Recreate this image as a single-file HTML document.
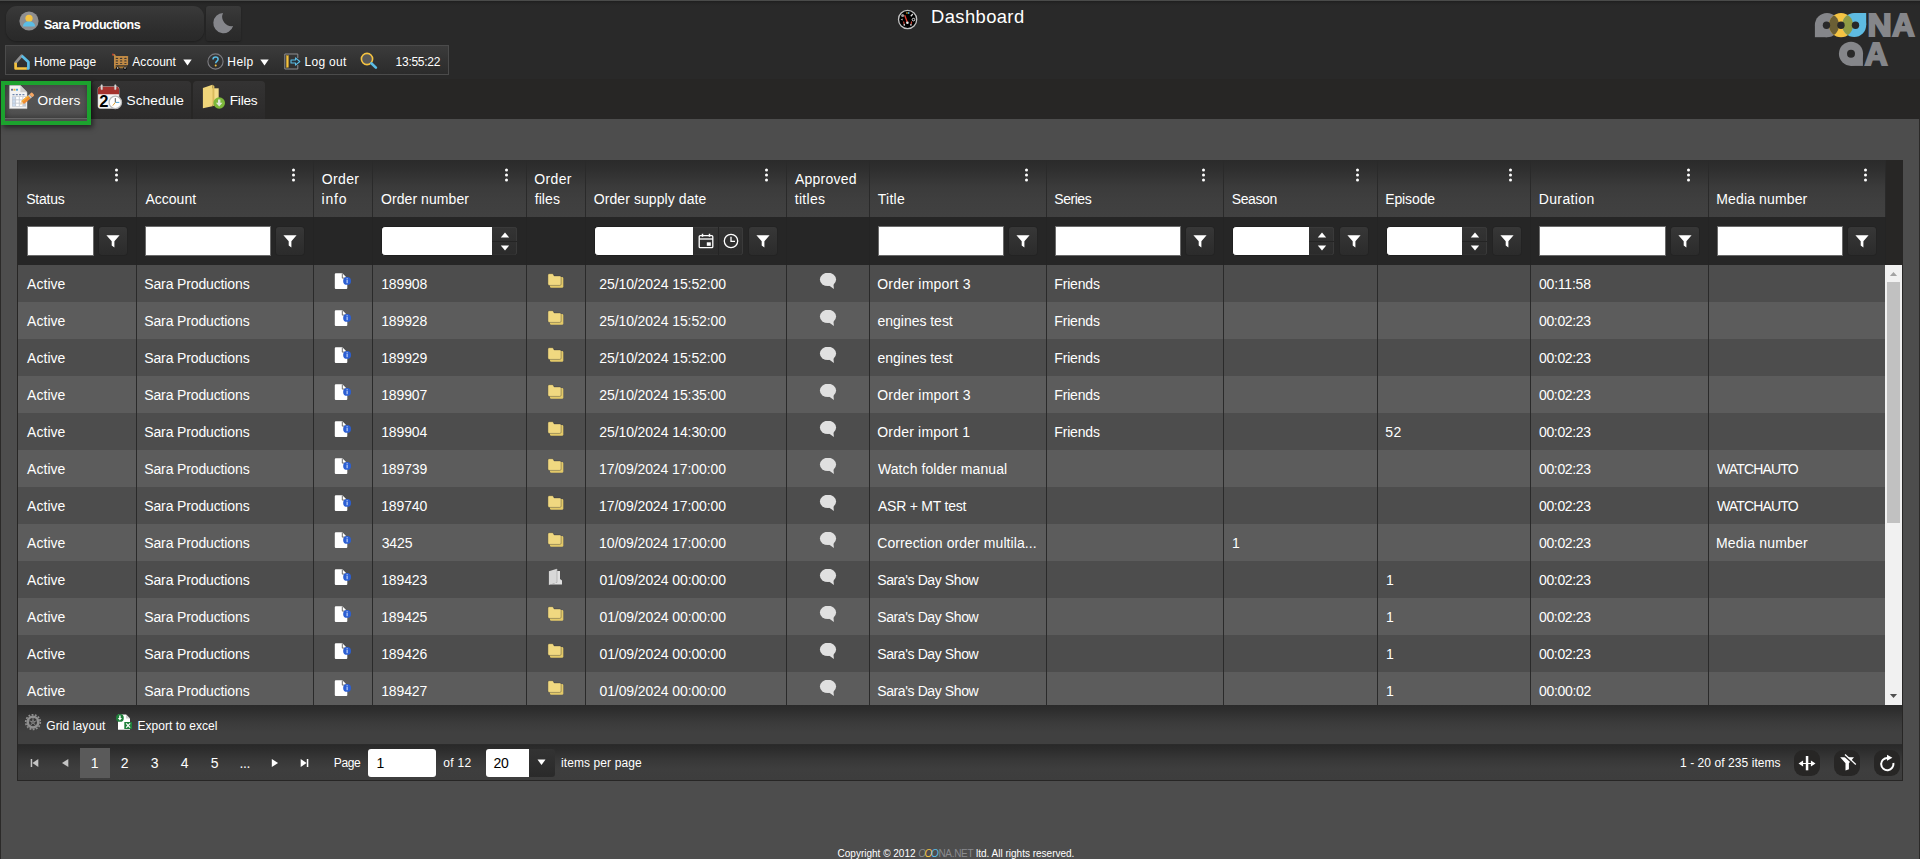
<!DOCTYPE html>
<html lang="en"><head><meta charset="utf-8"><title>Dashboard</title>
<style>
*{box-sizing:border-box;margin:0;padding:0}
html,body{width:1920px;height:859px;overflow:hidden}
body{background:#4d4d4d;font-family:"Liberation Sans",sans-serif;color:#fff;position:relative;font-size:12px}
.abs{position:absolute}
.t{position:absolute;white-space:pre;line-height:1}
#top{position:absolute;left:0;top:0;width:1920px;height:79px;background:#292929}
#topline{position:absolute;left:0;top:0;width:1920px;height:6px;background:linear-gradient(#4a4b4a 0,#4a4b4a 1px,#1f1f1f 1px,#222 2px,#272727 4px,#292929 6px)}
#tabband{position:absolute;left:0;top:79px;width:1920px;height:40px;background:#272625}
#ledge{position:absolute;left:0;top:119px;width:1px;height:740px;background:#2b2a29}
#redge{position:absolute;left:1919px;top:119px;width:1px;height:740px;background:#2b2a29}
.ub{position:absolute;top:6px;height:35px;background:linear-gradient(#3a3a3a,#343434 30%,#2c2c2c 75%,#292929);box-shadow:0 1px 2px rgba(0,0,0,.3)}
#menu{position:absolute;left:5px;top:45px;width:444px;height:30px;border:1px solid #4b4b4b;background:linear-gradient(#3b3b3b,#2b2b2b)}
.tab{position:absolute;top:81px;height:38px;border-radius:4px 4px 0 0;background:linear-gradient(#343333,#2b2a2a)}
#tab1{left:5px;width:83px;background:linear-gradient(#484848,#545454 50%,#505050);box-shadow:inset 0 0 6px rgba(0,0,0,.45);border-bottom:1px solid #666}
#green{position:absolute;left:1px;top:81px;width:90px;height:44px;border:4px solid #1ca22e;box-shadow:2px 3px 5px rgba(0,0,0,.5)}
#gridbg{position:absolute;left:17px;top:160px;width:1886px;height:621px;background:#272625}
#hdr{position:absolute;left:18px;top:160px;width:1867px;height:57px;background:linear-gradient(#2a2a2a 0%,#2e2e2e 14%,#3b3b3b 48%,#3f3f3f 72%,#414141 100%)}
#flt{position:absolute;left:18px;top:217px;width:1867px;height:48px;background:#262626}
.vl{position:absolute;width:1px;background:#2a2a2a}
.inp{position:absolute;top:226px;height:30px;background:#fff;border:1px solid #6a6a6a}
.fb{position:absolute;top:227px;width:28px;height:28px;border-radius:3px;background:linear-gradient(#373737,#2b2b2b);box-shadow:0 0 1px rgba(0,0,0,.6)}
.fb .ic{position:absolute;left:7px;top:7px}
.spin{position:absolute;top:227px;height:28px;width:25px;border-radius:0 3px 3px 0;background:linear-gradient(#343434,#2b2b2b);box-shadow:inset -1px 0 0 #3a3a3a,inset 0 1px 0 #3a3a3a,inset 0 -1px 0 #303030}
#body{position:absolute;left:18px;top:265px;width:1867px;height:440px;overflow:hidden}
.r{position:absolute;left:0;width:1867px;height:37px;background:#4d4d4d}
.r.alt{background:#5c5c5c}
.i{position:absolute}
.i svg{display:block}
#sb{position:absolute;left:1885px;top:265px;width:17px;height:440px;background:#f1f1f1}
#tb{position:absolute;left:18px;top:705px;width:1884px;height:39px;background:linear-gradient(#2a2a2a 0%,#2e2e2e 14%,#3b3b3b 46%,#404040 70%,#404040 100%)}
#pg{position:absolute;left:18px;top:744px;width:1884px;height:36px;background:linear-gradient(#292929 0%,#2d2d2d 14%,#393939 46%,#3e3e3e 70%,#3d3d3d 100%);border-top:1px solid #2b2b2b}
.rb{position:absolute;top:750px;width:26px;height:26px;border-radius:9px;background:#272625}
#foot{position:absolute;left:0;top:848px;width:1912px;text-align:center;font-size:10px;line-height:12px;white-space:pre}
</style></head><body>
<div id="top"></div><div id="topline"></div><div id="tabband"></div><div id="ledge"></div><div id="redge"></div>
<div class="ub" style="left:6px;width:198px;border-radius:11px"></div><div class="ub" style="left:206px;width:35px;border-radius:3px"></div><svg class="abs" style="left:18.500px;top:11px" width="20" height="20" viewBox="0 0 20 20"><circle cx="10" cy="10" r="9.600" fill="#8e8e90"/><circle cx="10" cy="7.300" r="3.600" fill="#f5c341"/><path d="M4 15.600c0-3.200 2.400-5 6-5s6 1.800 6 5z" fill="#5bbde6"/></svg><svg class="abs" style="left:211px;top:11px" width="24" height="24" viewBox="0 0 24 24"><path d="M12 2A10.100 10.100 0 1 0 22.100 15 9.400 9.400 0 0 1 12 2z" fill="#85868b"/></svg><div id="menu"></div><svg class="abs" style="left:14px;top:53px" width="17" height="17" viewBox="0 0 17 17"><path d="M1.600 9.700L7.700 2.700" stroke="#8e8e90" stroke-width="2.700" fill="none" stroke-linecap="round"/><path d="M7.700 2.700L14.400 9V15.500H12.500" stroke="#5bbde6" stroke-width="2.700" fill="none" stroke-linejoin="round"/><path d="M1.600 9.700V15.500H12.800" stroke="#f5c341" stroke-width="2.700" fill="none" stroke-linejoin="round"/></svg><svg class="abs" style="left:112px;top:53px" width="17" height="17" viewBox="0 0 17 17"><path d="M.5 1.500l1.900.5.9 1.500" stroke="#c08a45" stroke-width="1.500" fill="none"/><circle cx=".8" cy="1.500" r=".9" fill="#c0392b"/><rect x="2" y="2.900" width="14.100" height="9.400" rx=".7" fill="#c08a45"/><rect x="2" y="2.900" width="1.600" height="12.600" fill="#c08a45"/><rect x="2" y="13.400" width="12.600" height="1.900" fill="#a87835"/><g fill="#3b3733"><ellipse cx="4.900" cy="5.400" rx="1.300" ry=".6"/><ellipse cx="9.100" cy="5.400" rx="1.300" ry=".6"/><ellipse cx="13.400" cy="5.400" rx="1.300" ry=".6"/><ellipse cx="4.900" cy="7.900" rx="1.300" ry=".6"/><ellipse cx="9.100" cy="7.900" rx="1.300" ry=".6"/><ellipse cx="13.400" cy="7.900" rx="1.300" ry=".6"/><ellipse cx="4.900" cy="10.500" rx="1.300" ry=".6"/><ellipse cx="9.100" cy="10.500" rx="1.300" ry=".6"/><ellipse cx="13.400" cy="10.500" rx="1.300" ry=".6"/></g><circle cx="5.700" cy="15.200" r="1.750" fill="#0c0c0c"/><circle cx="13" cy="15.200" r="1.750" fill="#0c0c0c"/><circle cx="5.700" cy="15" r=".8" fill="#f0f0f0"/><circle cx="13" cy="15" r=".8" fill="#f0f0f0"/></svg><svg class="abs" style="left:182.5px;top:58.5px" width="9" height="7" viewBox="0 0 9 7"><path d="M.3.500h8.400L4.500 6.500z" fill="#fff"/></svg><svg class="abs" style="left:207px;top:53px" width="17" height="17" viewBox="0 0 17 17"><circle cx="8.500" cy="8.500" r="7.600" fill="none" stroke="#7d7d82" stroke-width="1.100"/><path d="M6 6.600c0-1.500 1.100-2.500 2.600-2.500s2.500.9 2.500 2.200c0 1.800-2.400 1.900-2.400 4" stroke="#5bbde6" stroke-width="1.500" fill="none"/><circle cx="8.700" cy="12.600" r="1" fill="#f5c341"/></svg><svg class="abs" style="left:259.5px;top:58.5px" width="9" height="7" viewBox="0 0 9 7"><path d="M.3.500h8.400L4.500 6.500z" fill="#fff"/></svg><svg class="abs" style="left:284px;top:53px" width="17" height="17" viewBox="0 0 17 17"><path d="M13.800 5V1H.8v15h13v-4" stroke="#8e8e90" stroke-width="1" fill="none"/><rect x="2.300" y="2.600" width="2.200" height="11.800" fill="#f5c341" stroke="#b8902a" stroke-width=".5"/><path d="M7 7h4.500V4.800l4.300 3.700-4.300 3.700V10H7z" fill="#26323a" stroke="#5bbde6" stroke-width="1.100" stroke-linejoin="round"/></svg><svg class="abs" style="left:360px;top:52px" width="19" height="18" viewBox="0 0 19 18"><circle cx="7" cy="7" r="5.600" fill="#585858" stroke="#f5c341" stroke-width="1.600"/><path d="M11.300 11.300l4.600 4.300" stroke="#5bbde6" stroke-width="2.600" stroke-linecap="round"/></svg><svg class="abs" style="left:897px;top:9px" width="21" height="21" viewBox="0 0 21 21"><circle cx="10.600" cy="10.500" r="9.100" fill="#000" stroke="#c2c2c2" stroke-width="1.300"/><path d="M10.200 13L7.700 6.200" stroke="#e8392c" stroke-width="1.300"/><circle cx="10.400" cy="13.700" r="1.300" fill="#e8e8e8"/><circle cx="5.600" cy="6.600" r="1.500" fill="#9a9a9a"/><path d="M13.800 7.200l2-2.200" stroke="#e0e0e0" stroke-width="1.300"/><circle cx="16.500" cy="10.600" r="1.300" fill="none" stroke="#e0e0e0" stroke-width="1"/><path d="M3.600 10.600l2-1v2z" fill="#bdbdbd"/><rect x="9.300" y="3.200" width="1.300" height="1.600" fill="#d6b23c"/><rect x="11" y="3.200" width="1.400" height="1.600" fill="#5bbde6"/><path d="M6.600 12.500l.6 3" stroke="#e04a3a" stroke-width="1.100"/><path d="M14.600 12.500l-.6 3" stroke="#e04a3a" stroke-width="1.100"/><circle cx="7.300" cy="15.900" r=".8" fill="#e8e8e8"/><circle cx="13.900" cy="15.900" r=".8" fill="#e8e8e8"/></svg><svg class="abs" style="left:1808px;top:6px" width="112" height="66" viewBox="0 0 112 66" role="img" aria-label="OOONA QA"><title>OOONA QA</title>
<defs><clipPath id="cy"><circle cx="33" cy="19.100" r="12.100"/></clipPath><clipPath id="cb"><circle cx="46.200" cy="19.100" r="12"/><rect x="46.200" y="7" width="12" height="12.100"/></clipPath></defs>
<g fill="#85868a"><circle cx="19" cy="19.100" r="12.100"/><rect x="6.900" y="19.100" width="12.100" height="12.100"/></g>
<circle cx="33" cy="19.100" r="12.100" fill="#f5c443"/>
<g fill="#6b5f35" clip-path="url(#cy)"><circle cx="19" cy="19.100" r="12.100"/><rect x="6.900" y="19.100" width="12.100" height="12.100"/></g>
<g fill="#5ebbe2"><circle cx="46.200" cy="19.100" r="12"/><rect x="46.200" y="7" width="12" height="12.100"/></g>
<circle cx="33" cy="19.100" r="12.100" fill="#8f9b45" clip-path="url(#cb)"/>
<circle cx="18.500" cy="19.200" r="3.700" fill="#292929"/><circle cx="33" cy="19.200" r="3.700" fill="#292929"/><circle cx="47.500" cy="19.200" r="3.700" fill="#292929"/>
<g font-family="'Liberation Sans',sans-serif" font-weight="bold" fill="#85868a" stroke="#85868a" stroke-width="2" stroke-linejoin="miter" font-size="31">
<text x="0" y="0" transform="translate(59.500 30.200) scale(1.080 1)">N</text>
<text x="0" y="0" transform="translate(84.300 30.200) scale(1 1)">A</text>
<text x="0" y="0" transform="translate(56.800 59) scale(1.020 1)">A</text>
</g>
<g fill="#85868a"><circle cx="43" cy="47.800" r="12.100"/><rect x="43" y="47.800" width="11.900" height="12.100"/></g>
<circle cx="43" cy="47.700" r="4" fill="#292929"/>
</svg>
<div class="tab" id="tab1"></div><div class="tab" style="left:92px;width:99px"></div><div class="tab" style="left:193px;width:72px"></div><svg class="abs" style="left:9px;top:85px" width="26" height="25" viewBox="0 0 26 25"><path d="M.6.600H11.400L18 7.200V23.600H.6z" fill="#f3f3f3" stroke="#d2d2d2" stroke-width=".5"/><path d="M11.400.6V7.200H18z" fill="#cdcdcd"/><rect x="2" y="3.800" width="2" height="1.800" fill="#5f6f8f"/><rect x="4.500" y="3.800" width="2" height="1.800" fill="#e0b040"/><rect x="7" y="3.800" width="2" height="1.800" fill="#4aa3d8"/><path d="M3.500 9.700h2M6.800 9.700h2M10.100 9.700h2M13.400 9.700h2" stroke="#6f86ad" stroke-width="1.300"/><rect x="3" y="11.300" width="14" height="10.400" fill="#c3c9d2"/><rect x="3.600" y="12" width="2.600" height="2.400" fill="#c9daee"/><rect x="3.600" y="15.300" width="2.600" height="2.400" fill="#c9daee"/><rect x="3.600" y="18.600" width="2.600" height="2.400" fill="#c9daee"/><rect x="7.100" y="12" width="2.700" height="2.400" fill="#fff"/><rect x="7.100" y="15.300" width="2.700" height="2.400" fill="#fff"/><rect x="7.100" y="18.600" width="2.700" height="2.400" fill="#fff"/><rect x="10.700" y="12" width="2.700" height="2.400" fill="#fff"/><rect x="10.700" y="15.300" width="2.700" height="2.400" fill="#fff"/><rect x="10.700" y="18.600" width="2.700" height="2.400" fill="#fff"/><rect x="14.300" y="12" width="2.200" height="2.400" fill="#fff"/><rect x="14.300" y="15.300" width="2.200" height="2.400" fill="#fff"/><g transform="translate(11 19.800) rotate(-40)"><path d="M0 0L3.500-2V2z" fill="#f4d3a6"/><rect x="3.500" y="-2" width="8.700" height="4" fill="#f08a2e"/><rect x="3.500" y="-2" width="8.700" height="1.400" fill="#f2b13a"/><rect x="12.200" y="-2" width="1.900" height="4" fill="#c6c6c6"/><rect x="14.100" y="-2" width="3.100" height="4" rx="1" fill="#f6a662"/></g></svg><svg class="abs" style="left:97px;top:84px" width="27" height="27" viewBox="0 0 27 27"><rect x="1" y="2.800" width="21" height="21.600" rx="2.200" fill="#f6f6f6" stroke="#cfcfcf" stroke-width=".6"/><path d="M1 5a2.200 2.200 0 0 1 2.200-2.200h16.600A2.200 2.200 0 0 1 22 5v5.300H1z" fill="#a5322d"/><rect x="3.800" y=".6" width="1.800" height="5.200" rx=".9" fill="#dcdcdc" stroke="#aaa" stroke-width=".3"/><rect x="17.400" y=".6" width="1.800" height="5.200" rx=".9" fill="#dcdcdc" stroke="#aaa" stroke-width=".3"/><text x="2.200" y="22.800" font-family="'Liberation Sans',sans-serif" font-weight="bold" font-size="16.500" fill="#000">2</text><circle cx="18.300" cy="18.400" r="6.200" fill="#fff" stroke="#b9b9b9" stroke-width="1.300"/><path d="M18.300 18.400v-4.300" stroke="#555" stroke-width="1"/><path d="M18.300 18.400h4" stroke="#4aa3d8" stroke-width="1"/><path d="M18.300 18.400l-2.500 3.200" stroke="#e0a030" stroke-width="1"/></svg><svg class="abs" style="left:201px;top:84px" width="26" height="27" viewBox="0 0 26 27"><path d="M10 4.300h7.700v16.500H10z" fill="#f3dc8a"/><path d="M1.900 4L11.400.8V22.300L1.900 24.200z" fill="#f0d57a"/><path d="M11.400.8l2 1.300V21.800l-2 .5z" fill="#d9bb5c"/><circle cx="18.200" cy="19" r="5.800" fill="#7cb83a"/><path d="M17 15.600h2.400v3.200h2.100l-3.300 3.600-3.300-3.600h2.100z" fill="#dfe6d8"/></svg><div id="green"></div><div id="gridbg"></div><div id="hdr"></div><div id="flt"></div><div class="vl" style="left:136px;top:160px;height:57px"></div><div class="vl" style="left:136px;top:217px;height:48px;background:#242424"></div><svg class="abs" style="left:114px;top:168px" width="5" height="14" viewBox="0 0 5 14"><circle cx="2.500" cy="2" r="1.500" fill="#fff"/><circle cx="2.500" cy="7.100" r="1.500" fill="#fff"/><circle cx="2.500" cy="12.100" r="1.500" fill="#fff"/></svg><div class="inp" style="left:27px;width:67px"></div><div class="fb" style="left:99px"><svg class="ic" width="14" height="14" viewBox="0 0 14 14"><path d="M0.400 1.300h13.200l-5.200 5.900v6.300l-2.700-2V7.200z" fill="#fff"/></svg></div><div class="vl" style="left:313px;top:160px;height:57px"></div><div class="vl" style="left:313px;top:217px;height:48px;background:#242424"></div><svg class="abs" style="left:291px;top:168px" width="5" height="14" viewBox="0 0 5 14"><circle cx="2.500" cy="2" r="1.500" fill="#fff"/><circle cx="2.500" cy="7.100" r="1.500" fill="#fff"/><circle cx="2.500" cy="12.100" r="1.500" fill="#fff"/></svg><div class="inp" style="left:145px;width:126px"></div><div class="fb" style="left:276px"><svg class="ic" width="14" height="14" viewBox="0 0 14 14"><path d="M0.400 1.300h13.200l-5.200 5.900v6.300l-2.700-2V7.200z" fill="#fff"/></svg></div><div class="vl" style="left:372px;top:160px;height:57px"></div><div class="vl" style="left:372px;top:217px;height:48px;background:#242424"></div><div class="vl" style="left:526px;top:160px;height:57px"></div><div class="vl" style="left:526px;top:217px;height:48px;background:#242424"></div><svg class="abs" style="left:504px;top:168px" width="5" height="14" viewBox="0 0 5 14"><circle cx="2.500" cy="2" r="1.500" fill="#fff"/><circle cx="2.500" cy="7.100" r="1.500" fill="#fff"/><circle cx="2.500" cy="12.100" r="1.500" fill="#fff"/></svg><div class="inp" style="left:381px;width:111px;border-radius:4px 0 0 4px;border-right:0;border-color:#1f1f1f"></div><div class="spin" style="left:492px"><svg class="abs" style="left:8px;top:4.500px" width="10" height="6" viewBox="0 0 10 6"><path d="M.8 5.600L5 .4l4.200 5.200z" fill="#fff"/></svg><svg class="abs" style="left:8px;top:17.500px" width="10" height="6" viewBox="0 0 10 6"><path d="M.8.400L5 5.600 9.200.4z" fill="#fff"/></svg><div class="abs" style="left:0;top:13.500px;width:25px;height:1px;background:#242424"></div></div><div class="vl" style="left:585px;top:160px;height:57px"></div><div class="vl" style="left:585px;top:217px;height:48px;background:#242424"></div><div class="vl" style="left:786px;top:160px;height:57px"></div><div class="vl" style="left:786px;top:217px;height:48px;background:#242424"></div><svg class="abs" style="left:764px;top:168px" width="5" height="14" viewBox="0 0 5 14"><circle cx="2.500" cy="2" r="1.500" fill="#fff"/><circle cx="2.500" cy="7.100" r="1.500" fill="#fff"/><circle cx="2.500" cy="12.100" r="1.500" fill="#fff"/></svg><div class="inp" style="left:594px;width:99px;border-radius:4px 0 0 4px;border-right:0;border-color:#1f1f1f"></div><div class="spin" style="left:693px;width:50px"><div class="abs" style="left:25px;top:0;width:1px;height:28px;background:#242424"></div><svg class="abs" style="left:5px;top:5.500px" width="16" height="16" viewBox="0 0 16 16"><rect x="1.200" y="2.700" width="13.600" height="12" rx="1" fill="none" stroke="#fff" stroke-width="1.300"/><path d="M1.200 6h13.600" stroke="#fff" stroke-width="1.300"/><path d="M4.500.8v3M11.500.8v3" stroke="#fff" stroke-width="1.500"/><rect x="8.800" y="9.300" width="4" height="3.500" fill="#fff"/></svg><svg class="abs" style="left:30px;top:6px" width="16" height="16" viewBox="0 0 16 16"><circle cx="8" cy="8" r="6.700" fill="none" stroke="#fff" stroke-width="1.300"/><path d="M8 3.800V8.300h4" fill="none" stroke="#fff" stroke-width="1.300"/></svg></div><div class="fb" style="left:749px"><svg class="ic" width="14" height="14" viewBox="0 0 14 14"><path d="M0.400 1.300h13.200l-5.200 5.900v6.300l-2.700-2V7.200z" fill="#fff"/></svg></div><div class="vl" style="left:869px;top:160px;height:57px"></div><div class="vl" style="left:869px;top:217px;height:48px;background:#242424"></div><div class="vl" style="left:1046px;top:160px;height:57px"></div><div class="vl" style="left:1046px;top:217px;height:48px;background:#242424"></div><svg class="abs" style="left:1024px;top:168px" width="5" height="14" viewBox="0 0 5 14"><circle cx="2.500" cy="2" r="1.500" fill="#fff"/><circle cx="2.500" cy="7.100" r="1.500" fill="#fff"/><circle cx="2.500" cy="12.100" r="1.500" fill="#fff"/></svg><div class="inp" style="left:878px;width:126px"></div><div class="fb" style="left:1009px"><svg class="ic" width="14" height="14" viewBox="0 0 14 14"><path d="M0.400 1.300h13.200l-5.200 5.900v6.300l-2.700-2V7.200z" fill="#fff"/></svg></div><div class="vl" style="left:1223px;top:160px;height:57px"></div><div class="vl" style="left:1223px;top:217px;height:48px;background:#242424"></div><svg class="abs" style="left:1201px;top:168px" width="5" height="14" viewBox="0 0 5 14"><circle cx="2.500" cy="2" r="1.500" fill="#fff"/><circle cx="2.500" cy="7.100" r="1.500" fill="#fff"/><circle cx="2.500" cy="12.100" r="1.500" fill="#fff"/></svg><div class="inp" style="left:1055px;width:126px"></div><div class="fb" style="left:1186px"><svg class="ic" width="14" height="14" viewBox="0 0 14 14"><path d="M0.400 1.300h13.200l-5.200 5.900v6.300l-2.700-2V7.200z" fill="#fff"/></svg></div><div class="vl" style="left:1377px;top:160px;height:57px"></div><div class="vl" style="left:1377px;top:217px;height:48px;background:#242424"></div><svg class="abs" style="left:1355px;top:168px" width="5" height="14" viewBox="0 0 5 14"><circle cx="2.500" cy="2" r="1.500" fill="#fff"/><circle cx="2.500" cy="7.100" r="1.500" fill="#fff"/><circle cx="2.500" cy="12.100" r="1.500" fill="#fff"/></svg><div class="inp" style="left:1232px;width:77px;border-radius:4px 0 0 4px;border-right:0;border-color:#1f1f1f"></div><div class="spin" style="left:1309px"><svg class="abs" style="left:8px;top:4.500px" width="10" height="6" viewBox="0 0 10 6"><path d="M.8 5.600L5 .4l4.200 5.200z" fill="#fff"/></svg><svg class="abs" style="left:8px;top:17.500px" width="10" height="6" viewBox="0 0 10 6"><path d="M.8.400L5 5.600 9.200.4z" fill="#fff"/></svg><div class="abs" style="left:0;top:13.500px;width:25px;height:1px;background:#242424"></div></div><div class="fb" style="left:1340px"><svg class="ic" width="14" height="14" viewBox="0 0 14 14"><path d="M0.400 1.300h13.200l-5.200 5.900v6.300l-2.700-2V7.200z" fill="#fff"/></svg></div><div class="vl" style="left:1530px;top:160px;height:57px"></div><div class="vl" style="left:1530px;top:217px;height:48px;background:#242424"></div><svg class="abs" style="left:1508px;top:168px" width="5" height="14" viewBox="0 0 5 14"><circle cx="2.500" cy="2" r="1.500" fill="#fff"/><circle cx="2.500" cy="7.100" r="1.500" fill="#fff"/><circle cx="2.500" cy="12.100" r="1.500" fill="#fff"/></svg><div class="inp" style="left:1386px;width:76px;border-radius:4px 0 0 4px;border-right:0;border-color:#1f1f1f"></div><div class="spin" style="left:1462px"><svg class="abs" style="left:8px;top:4.500px" width="10" height="6" viewBox="0 0 10 6"><path d="M.8 5.600L5 .4l4.200 5.200z" fill="#fff"/></svg><svg class="abs" style="left:8px;top:17.500px" width="10" height="6" viewBox="0 0 10 6"><path d="M.8.400L5 5.600 9.200.4z" fill="#fff"/></svg><div class="abs" style="left:0;top:13.500px;width:25px;height:1px;background:#242424"></div></div><div class="fb" style="left:1493px"><svg class="ic" width="14" height="14" viewBox="0 0 14 14"><path d="M0.400 1.300h13.200l-5.200 5.900v6.300l-2.700-2V7.200z" fill="#fff"/></svg></div><div class="vl" style="left:1708px;top:160px;height:57px"></div><div class="vl" style="left:1708px;top:217px;height:48px;background:#242424"></div><svg class="abs" style="left:1686px;top:168px" width="5" height="14" viewBox="0 0 5 14"><circle cx="2.500" cy="2" r="1.500" fill="#fff"/><circle cx="2.500" cy="7.100" r="1.500" fill="#fff"/><circle cx="2.500" cy="12.100" r="1.500" fill="#fff"/></svg><div class="inp" style="left:1539px;width:127px"></div><div class="fb" style="left:1671px"><svg class="ic" width="14" height="14" viewBox="0 0 14 14"><path d="M0.400 1.300h13.200l-5.200 5.900v6.300l-2.700-2V7.200z" fill="#fff"/></svg></div><div class="vl" style="left:1885px;top:160px;height:57px"></div><div class="vl" style="left:1885px;top:217px;height:48px;background:#242424"></div><svg class="abs" style="left:1863px;top:168px" width="5" height="14" viewBox="0 0 5 14"><circle cx="2.500" cy="2" r="1.500" fill="#fff"/><circle cx="2.500" cy="7.100" r="1.500" fill="#fff"/><circle cx="2.500" cy="12.100" r="1.500" fill="#fff"/></svg><div class="inp" style="left:1717px;width:126px"></div><div class="fb" style="left:1848px"><svg class="ic" width="14" height="14" viewBox="0 0 14 14"><path d="M0.400 1.300h13.200l-5.200 5.900v6.300l-2.700-2V7.200z" fill="#fff"/></svg></div><div id="body"><div class="r" style="top:0px"><div class="vl" style="left:118px;top:0;height:37px"></div><div class="vl" style="left:295px;top:0;height:37px"></div><div class="vl" style="left:354px;top:0;height:37px"></div><div class="vl" style="left:508px;top:0;height:37px"></div><div class="vl" style="left:567px;top:0;height:37px"></div><div class="vl" style="left:768px;top:0;height:37px"></div><div class="vl" style="left:851px;top:0;height:37px"></div><div class="vl" style="left:1028px;top:0;height:37px"></div><div class="vl" style="left:1205px;top:0;height:37px"></div><div class="vl" style="left:1359px;top:0;height:37px"></div><div class="vl" style="left:1512px;top:0;height:37px"></div><div class="vl" style="left:1690px;top:0;height:37px"></div><div class="vl" style="left:1867px;top:0;height:37px"></div><span class="i" style="left:316px;top:8px"><svg width="18" height="17" viewBox="0 0 18 17"><path d="M1.800.2H8.400L13.300 5.200V15a1 1 0 0 1-1 1H1.800a1 1 0 0 1-1-1V1.200a1 1 0 0 1 1-1z" fill="#fff"/><path d="M8.300.5V5.100H13" stroke="#5a5a5a" stroke-width=".9" fill="none"/><circle cx="13.100" cy="7.900" r="3.950" fill="#2c5fd3"/><rect x="12.450" y="6.900" width="1.400" height="3.300" fill="#a9c0f0"/><rect x="12.450" y="5.200" width="1.400" height="1.100" fill="#a9c0f0"/></svg></span><span class="i" style="left:529px;top:8px"><svg width="17" height="16" viewBox="0 0 17 16"><path d="M4.300 4H15a1.300 1.300 0 0 1 1.300 1.300V13.400a1.300 1.300 0 0 1-1.300 1.300H4.300A1.300 1.300 0 0 1 3 13.400V5.300z" fill="#e3c968"/><path d="M2.200.7H5.900L7.100 2.900H12.800a1.300 1.300 0 0 1 1.300 1.300V11.100a1.300 1.300 0 0 1-1.300 1.300H2.200A1.300 1.300 0 0 1 .9 11.100V2A1.300 1.300 0 0 1 2.200.7z" fill="#f0d880" stroke="rgba(50,50,50,.55)" stroke-width=".7"/></svg></span><span class="i" style="left:801px;top:8px"><svg width="18" height="17" viewBox="0 0 18 17"><ellipse cx="9" cy="6.400" rx="8.100" ry="6.700" fill="#e0e0e0"/><path d="M10 12.400L14.900 16.100L14.300 9.500z" fill="#e0e0e0"/></svg></span></div><div class="r alt" style="top:37px"><div class="vl" style="left:118px;top:0;height:37px"></div><div class="vl" style="left:295px;top:0;height:37px"></div><div class="vl" style="left:354px;top:0;height:37px"></div><div class="vl" style="left:508px;top:0;height:37px"></div><div class="vl" style="left:567px;top:0;height:37px"></div><div class="vl" style="left:768px;top:0;height:37px"></div><div class="vl" style="left:851px;top:0;height:37px"></div><div class="vl" style="left:1028px;top:0;height:37px"></div><div class="vl" style="left:1205px;top:0;height:37px"></div><div class="vl" style="left:1359px;top:0;height:37px"></div><div class="vl" style="left:1512px;top:0;height:37px"></div><div class="vl" style="left:1690px;top:0;height:37px"></div><div class="vl" style="left:1867px;top:0;height:37px"></div><span class="i" style="left:316px;top:8px"><svg width="18" height="17" viewBox="0 0 18 17"><path d="M1.800.2H8.400L13.300 5.200V15a1 1 0 0 1-1 1H1.800a1 1 0 0 1-1-1V1.200a1 1 0 0 1 1-1z" fill="#fff"/><path d="M8.300.5V5.100H13" stroke="#5a5a5a" stroke-width=".9" fill="none"/><circle cx="13.100" cy="7.900" r="3.950" fill="#2c5fd3"/><rect x="12.450" y="6.900" width="1.400" height="3.300" fill="#a9c0f0"/><rect x="12.450" y="5.200" width="1.400" height="1.100" fill="#a9c0f0"/></svg></span><span class="i" style="left:529px;top:8px"><svg width="17" height="16" viewBox="0 0 17 16"><path d="M4.300 4H15a1.300 1.300 0 0 1 1.300 1.300V13.400a1.300 1.300 0 0 1-1.300 1.300H4.300A1.300 1.300 0 0 1 3 13.400V5.300z" fill="#e3c968"/><path d="M2.200.7H5.900L7.100 2.900H12.800a1.300 1.300 0 0 1 1.300 1.300V11.100a1.300 1.300 0 0 1-1.300 1.300H2.200A1.300 1.300 0 0 1 .9 11.100V2A1.300 1.300 0 0 1 2.200.7z" fill="#f0d880" stroke="rgba(50,50,50,.55)" stroke-width=".7"/></svg></span><span class="i" style="left:801px;top:8px"><svg width="18" height="17" viewBox="0 0 18 17"><ellipse cx="9" cy="6.400" rx="8.100" ry="6.700" fill="#e0e0e0"/><path d="M10 12.400L14.900 16.100L14.300 9.500z" fill="#e0e0e0"/></svg></span></div><div class="r" style="top:74px"><div class="vl" style="left:118px;top:0;height:37px"></div><div class="vl" style="left:295px;top:0;height:37px"></div><div class="vl" style="left:354px;top:0;height:37px"></div><div class="vl" style="left:508px;top:0;height:37px"></div><div class="vl" style="left:567px;top:0;height:37px"></div><div class="vl" style="left:768px;top:0;height:37px"></div><div class="vl" style="left:851px;top:0;height:37px"></div><div class="vl" style="left:1028px;top:0;height:37px"></div><div class="vl" style="left:1205px;top:0;height:37px"></div><div class="vl" style="left:1359px;top:0;height:37px"></div><div class="vl" style="left:1512px;top:0;height:37px"></div><div class="vl" style="left:1690px;top:0;height:37px"></div><div class="vl" style="left:1867px;top:0;height:37px"></div><span class="i" style="left:316px;top:8px"><svg width="18" height="17" viewBox="0 0 18 17"><path d="M1.800.2H8.400L13.300 5.200V15a1 1 0 0 1-1 1H1.800a1 1 0 0 1-1-1V1.200a1 1 0 0 1 1-1z" fill="#fff"/><path d="M8.300.5V5.100H13" stroke="#5a5a5a" stroke-width=".9" fill="none"/><circle cx="13.100" cy="7.900" r="3.950" fill="#2c5fd3"/><rect x="12.450" y="6.900" width="1.400" height="3.300" fill="#a9c0f0"/><rect x="12.450" y="5.200" width="1.400" height="1.100" fill="#a9c0f0"/></svg></span><span class="i" style="left:529px;top:8px"><svg width="17" height="16" viewBox="0 0 17 16"><path d="M4.300 4H15a1.300 1.300 0 0 1 1.300 1.300V13.400a1.300 1.300 0 0 1-1.300 1.300H4.300A1.300 1.300 0 0 1 3 13.400V5.300z" fill="#e3c968"/><path d="M2.200.7H5.900L7.100 2.900H12.800a1.300 1.300 0 0 1 1.300 1.300V11.100a1.300 1.300 0 0 1-1.300 1.300H2.200A1.300 1.300 0 0 1 .9 11.100V2A1.300 1.300 0 0 1 2.200.7z" fill="#f0d880" stroke="rgba(50,50,50,.55)" stroke-width=".7"/></svg></span><span class="i" style="left:801px;top:8px"><svg width="18" height="17" viewBox="0 0 18 17"><ellipse cx="9" cy="6.400" rx="8.100" ry="6.700" fill="#e0e0e0"/><path d="M10 12.400L14.900 16.100L14.300 9.500z" fill="#e0e0e0"/></svg></span></div><div class="r alt" style="top:111px"><div class="vl" style="left:118px;top:0;height:37px"></div><div class="vl" style="left:295px;top:0;height:37px"></div><div class="vl" style="left:354px;top:0;height:37px"></div><div class="vl" style="left:508px;top:0;height:37px"></div><div class="vl" style="left:567px;top:0;height:37px"></div><div class="vl" style="left:768px;top:0;height:37px"></div><div class="vl" style="left:851px;top:0;height:37px"></div><div class="vl" style="left:1028px;top:0;height:37px"></div><div class="vl" style="left:1205px;top:0;height:37px"></div><div class="vl" style="left:1359px;top:0;height:37px"></div><div class="vl" style="left:1512px;top:0;height:37px"></div><div class="vl" style="left:1690px;top:0;height:37px"></div><div class="vl" style="left:1867px;top:0;height:37px"></div><span class="i" style="left:316px;top:8px"><svg width="18" height="17" viewBox="0 0 18 17"><path d="M1.800.2H8.400L13.300 5.200V15a1 1 0 0 1-1 1H1.800a1 1 0 0 1-1-1V1.200a1 1 0 0 1 1-1z" fill="#fff"/><path d="M8.300.5V5.100H13" stroke="#5a5a5a" stroke-width=".9" fill="none"/><circle cx="13.100" cy="7.900" r="3.950" fill="#2c5fd3"/><rect x="12.450" y="6.900" width="1.400" height="3.300" fill="#a9c0f0"/><rect x="12.450" y="5.200" width="1.400" height="1.100" fill="#a9c0f0"/></svg></span><span class="i" style="left:529px;top:8px"><svg width="17" height="16" viewBox="0 0 17 16"><path d="M4.300 4H15a1.300 1.300 0 0 1 1.300 1.300V13.400a1.300 1.300 0 0 1-1.300 1.300H4.300A1.300 1.300 0 0 1 3 13.400V5.300z" fill="#e3c968"/><path d="M2.200.7H5.900L7.100 2.900H12.800a1.300 1.300 0 0 1 1.300 1.300V11.100a1.300 1.300 0 0 1-1.300 1.300H2.200A1.300 1.300 0 0 1 .9 11.100V2A1.300 1.300 0 0 1 2.200.7z" fill="#f0d880" stroke="rgba(50,50,50,.55)" stroke-width=".7"/></svg></span><span class="i" style="left:801px;top:8px"><svg width="18" height="17" viewBox="0 0 18 17"><ellipse cx="9" cy="6.400" rx="8.100" ry="6.700" fill="#e0e0e0"/><path d="M10 12.400L14.900 16.100L14.300 9.500z" fill="#e0e0e0"/></svg></span></div><div class="r" style="top:148px"><div class="vl" style="left:118px;top:0;height:37px"></div><div class="vl" style="left:295px;top:0;height:37px"></div><div class="vl" style="left:354px;top:0;height:37px"></div><div class="vl" style="left:508px;top:0;height:37px"></div><div class="vl" style="left:567px;top:0;height:37px"></div><div class="vl" style="left:768px;top:0;height:37px"></div><div class="vl" style="left:851px;top:0;height:37px"></div><div class="vl" style="left:1028px;top:0;height:37px"></div><div class="vl" style="left:1205px;top:0;height:37px"></div><div class="vl" style="left:1359px;top:0;height:37px"></div><div class="vl" style="left:1512px;top:0;height:37px"></div><div class="vl" style="left:1690px;top:0;height:37px"></div><div class="vl" style="left:1867px;top:0;height:37px"></div><span class="i" style="left:316px;top:8px"><svg width="18" height="17" viewBox="0 0 18 17"><path d="M1.800.2H8.400L13.300 5.200V15a1 1 0 0 1-1 1H1.800a1 1 0 0 1-1-1V1.200a1 1 0 0 1 1-1z" fill="#fff"/><path d="M8.300.5V5.100H13" stroke="#5a5a5a" stroke-width=".9" fill="none"/><circle cx="13.100" cy="7.900" r="3.950" fill="#2c5fd3"/><rect x="12.450" y="6.900" width="1.400" height="3.300" fill="#a9c0f0"/><rect x="12.450" y="5.200" width="1.400" height="1.100" fill="#a9c0f0"/></svg></span><span class="i" style="left:529px;top:8px"><svg width="17" height="16" viewBox="0 0 17 16"><path d="M4.300 4H15a1.300 1.300 0 0 1 1.300 1.300V13.400a1.300 1.300 0 0 1-1.300 1.300H4.300A1.300 1.300 0 0 1 3 13.400V5.300z" fill="#e3c968"/><path d="M2.200.7H5.900L7.100 2.900H12.800a1.300 1.300 0 0 1 1.300 1.300V11.100a1.300 1.300 0 0 1-1.300 1.300H2.200A1.300 1.300 0 0 1 .9 11.100V2A1.300 1.300 0 0 1 2.200.7z" fill="#f0d880" stroke="rgba(50,50,50,.55)" stroke-width=".7"/></svg></span><span class="i" style="left:801px;top:8px"><svg width="18" height="17" viewBox="0 0 18 17"><ellipse cx="9" cy="6.400" rx="8.100" ry="6.700" fill="#e0e0e0"/><path d="M10 12.400L14.900 16.100L14.300 9.500z" fill="#e0e0e0"/></svg></span></div><div class="r alt" style="top:185px"><div class="vl" style="left:118px;top:0;height:37px"></div><div class="vl" style="left:295px;top:0;height:37px"></div><div class="vl" style="left:354px;top:0;height:37px"></div><div class="vl" style="left:508px;top:0;height:37px"></div><div class="vl" style="left:567px;top:0;height:37px"></div><div class="vl" style="left:768px;top:0;height:37px"></div><div class="vl" style="left:851px;top:0;height:37px"></div><div class="vl" style="left:1028px;top:0;height:37px"></div><div class="vl" style="left:1205px;top:0;height:37px"></div><div class="vl" style="left:1359px;top:0;height:37px"></div><div class="vl" style="left:1512px;top:0;height:37px"></div><div class="vl" style="left:1690px;top:0;height:37px"></div><div class="vl" style="left:1867px;top:0;height:37px"></div><span class="i" style="left:316px;top:8px"><svg width="18" height="17" viewBox="0 0 18 17"><path d="M1.800.2H8.400L13.300 5.200V15a1 1 0 0 1-1 1H1.800a1 1 0 0 1-1-1V1.200a1 1 0 0 1 1-1z" fill="#fff"/><path d="M8.300.5V5.100H13" stroke="#5a5a5a" stroke-width=".9" fill="none"/><circle cx="13.100" cy="7.900" r="3.950" fill="#2c5fd3"/><rect x="12.450" y="6.900" width="1.400" height="3.300" fill="#a9c0f0"/><rect x="12.450" y="5.200" width="1.400" height="1.100" fill="#a9c0f0"/></svg></span><span class="i" style="left:529px;top:8px"><svg width="17" height="16" viewBox="0 0 17 16"><path d="M4.300 4H15a1.300 1.300 0 0 1 1.300 1.300V13.400a1.300 1.300 0 0 1-1.300 1.300H4.300A1.300 1.300 0 0 1 3 13.400V5.300z" fill="#e3c968"/><path d="M2.200.7H5.900L7.100 2.900H12.800a1.300 1.300 0 0 1 1.300 1.300V11.100a1.300 1.300 0 0 1-1.300 1.300H2.200A1.300 1.300 0 0 1 .9 11.100V2A1.300 1.300 0 0 1 2.200.7z" fill="#f0d880" stroke="rgba(50,50,50,.55)" stroke-width=".7"/></svg></span><span class="i" style="left:801px;top:8px"><svg width="18" height="17" viewBox="0 0 18 17"><ellipse cx="9" cy="6.400" rx="8.100" ry="6.700" fill="#e0e0e0"/><path d="M10 12.400L14.900 16.100L14.300 9.500z" fill="#e0e0e0"/></svg></span></div><div class="r" style="top:222px"><div class="vl" style="left:118px;top:0;height:37px"></div><div class="vl" style="left:295px;top:0;height:37px"></div><div class="vl" style="left:354px;top:0;height:37px"></div><div class="vl" style="left:508px;top:0;height:37px"></div><div class="vl" style="left:567px;top:0;height:37px"></div><div class="vl" style="left:768px;top:0;height:37px"></div><div class="vl" style="left:851px;top:0;height:37px"></div><div class="vl" style="left:1028px;top:0;height:37px"></div><div class="vl" style="left:1205px;top:0;height:37px"></div><div class="vl" style="left:1359px;top:0;height:37px"></div><div class="vl" style="left:1512px;top:0;height:37px"></div><div class="vl" style="left:1690px;top:0;height:37px"></div><div class="vl" style="left:1867px;top:0;height:37px"></div><span class="i" style="left:316px;top:8px"><svg width="18" height="17" viewBox="0 0 18 17"><path d="M1.800.2H8.400L13.300 5.200V15a1 1 0 0 1-1 1H1.800a1 1 0 0 1-1-1V1.200a1 1 0 0 1 1-1z" fill="#fff"/><path d="M8.300.5V5.100H13" stroke="#5a5a5a" stroke-width=".9" fill="none"/><circle cx="13.100" cy="7.900" r="3.950" fill="#2c5fd3"/><rect x="12.450" y="6.900" width="1.400" height="3.300" fill="#a9c0f0"/><rect x="12.450" y="5.200" width="1.400" height="1.100" fill="#a9c0f0"/></svg></span><span class="i" style="left:529px;top:8px"><svg width="17" height="16" viewBox="0 0 17 16"><path d="M4.300 4H15a1.300 1.300 0 0 1 1.300 1.300V13.400a1.300 1.300 0 0 1-1.300 1.300H4.300A1.300 1.300 0 0 1 3 13.400V5.300z" fill="#e3c968"/><path d="M2.200.7H5.900L7.100 2.900H12.800a1.300 1.300 0 0 1 1.300 1.300V11.100a1.300 1.300 0 0 1-1.300 1.300H2.200A1.300 1.300 0 0 1 .9 11.100V2A1.300 1.300 0 0 1 2.200.7z" fill="#f0d880" stroke="rgba(50,50,50,.55)" stroke-width=".7"/></svg></span><span class="i" style="left:801px;top:8px"><svg width="18" height="17" viewBox="0 0 18 17"><ellipse cx="9" cy="6.400" rx="8.100" ry="6.700" fill="#e0e0e0"/><path d="M10 12.400L14.900 16.100L14.300 9.500z" fill="#e0e0e0"/></svg></span></div><div class="r alt" style="top:259px"><div class="vl" style="left:118px;top:0;height:37px"></div><div class="vl" style="left:295px;top:0;height:37px"></div><div class="vl" style="left:354px;top:0;height:37px"></div><div class="vl" style="left:508px;top:0;height:37px"></div><div class="vl" style="left:567px;top:0;height:37px"></div><div class="vl" style="left:768px;top:0;height:37px"></div><div class="vl" style="left:851px;top:0;height:37px"></div><div class="vl" style="left:1028px;top:0;height:37px"></div><div class="vl" style="left:1205px;top:0;height:37px"></div><div class="vl" style="left:1359px;top:0;height:37px"></div><div class="vl" style="left:1512px;top:0;height:37px"></div><div class="vl" style="left:1690px;top:0;height:37px"></div><div class="vl" style="left:1867px;top:0;height:37px"></div><span class="i" style="left:316px;top:8px"><svg width="18" height="17" viewBox="0 0 18 17"><path d="M1.800.2H8.400L13.300 5.200V15a1 1 0 0 1-1 1H1.800a1 1 0 0 1-1-1V1.200a1 1 0 0 1 1-1z" fill="#fff"/><path d="M8.300.5V5.100H13" stroke="#5a5a5a" stroke-width=".9" fill="none"/><circle cx="13.100" cy="7.900" r="3.950" fill="#2c5fd3"/><rect x="12.450" y="6.900" width="1.400" height="3.300" fill="#a9c0f0"/><rect x="12.450" y="5.200" width="1.400" height="1.100" fill="#a9c0f0"/></svg></span><span class="i" style="left:529px;top:8px"><svg width="17" height="16" viewBox="0 0 17 16"><path d="M4.300 4H15a1.300 1.300 0 0 1 1.300 1.300V13.400a1.300 1.300 0 0 1-1.300 1.300H4.300A1.300 1.300 0 0 1 3 13.400V5.300z" fill="#e3c968"/><path d="M2.200.7H5.900L7.100 2.900H12.800a1.300 1.300 0 0 1 1.300 1.300V11.100a1.300 1.300 0 0 1-1.300 1.300H2.200A1.300 1.300 0 0 1 .9 11.100V2A1.300 1.300 0 0 1 2.200.7z" fill="#f0d880" stroke="rgba(50,50,50,.55)" stroke-width=".7"/></svg></span><span class="i" style="left:801px;top:8px"><svg width="18" height="17" viewBox="0 0 18 17"><ellipse cx="9" cy="6.400" rx="8.100" ry="6.700" fill="#e0e0e0"/><path d="M10 12.400L14.900 16.100L14.300 9.500z" fill="#e0e0e0"/></svg></span></div><div class="r" style="top:296px"><div class="vl" style="left:118px;top:0;height:37px"></div><div class="vl" style="left:295px;top:0;height:37px"></div><div class="vl" style="left:354px;top:0;height:37px"></div><div class="vl" style="left:508px;top:0;height:37px"></div><div class="vl" style="left:567px;top:0;height:37px"></div><div class="vl" style="left:768px;top:0;height:37px"></div><div class="vl" style="left:851px;top:0;height:37px"></div><div class="vl" style="left:1028px;top:0;height:37px"></div><div class="vl" style="left:1205px;top:0;height:37px"></div><div class="vl" style="left:1359px;top:0;height:37px"></div><div class="vl" style="left:1512px;top:0;height:37px"></div><div class="vl" style="left:1690px;top:0;height:37px"></div><div class="vl" style="left:1867px;top:0;height:37px"></div><span class="i" style="left:316px;top:8px"><svg width="18" height="17" viewBox="0 0 18 17"><path d="M1.800.2H8.400L13.300 5.200V15a1 1 0 0 1-1 1H1.800a1 1 0 0 1-1-1V1.200a1 1 0 0 1 1-1z" fill="#fff"/><path d="M8.300.5V5.100H13" stroke="#5a5a5a" stroke-width=".9" fill="none"/><circle cx="13.100" cy="7.900" r="3.950" fill="#2c5fd3"/><rect x="12.450" y="6.900" width="1.400" height="3.300" fill="#a9c0f0"/><rect x="12.450" y="5.200" width="1.400" height="1.100" fill="#a9c0f0"/></svg></span><span class="i" style="left:530px;top:7px"><svg width="15" height="18" viewBox="0 0 15 18"><path d="M9 3H12V11L14 12.500V16.500H2L9 14.500z" fill="#e0e0e0"/><path d="M.9 3.200L9 .8V14.500L.9 16.900z" fill="#d8d8d8"/><path d="M9 1V14.400" stroke="#a8a8a8" stroke-width=".7"/></svg></span><span class="i" style="left:801px;top:8px"><svg width="18" height="17" viewBox="0 0 18 17"><ellipse cx="9" cy="6.400" rx="8.100" ry="6.700" fill="#e0e0e0"/><path d="M10 12.400L14.900 16.100L14.300 9.500z" fill="#e0e0e0"/></svg></span></div><div class="r alt" style="top:333px"><div class="vl" style="left:118px;top:0;height:37px"></div><div class="vl" style="left:295px;top:0;height:37px"></div><div class="vl" style="left:354px;top:0;height:37px"></div><div class="vl" style="left:508px;top:0;height:37px"></div><div class="vl" style="left:567px;top:0;height:37px"></div><div class="vl" style="left:768px;top:0;height:37px"></div><div class="vl" style="left:851px;top:0;height:37px"></div><div class="vl" style="left:1028px;top:0;height:37px"></div><div class="vl" style="left:1205px;top:0;height:37px"></div><div class="vl" style="left:1359px;top:0;height:37px"></div><div class="vl" style="left:1512px;top:0;height:37px"></div><div class="vl" style="left:1690px;top:0;height:37px"></div><div class="vl" style="left:1867px;top:0;height:37px"></div><span class="i" style="left:316px;top:8px"><svg width="18" height="17" viewBox="0 0 18 17"><path d="M1.800.2H8.400L13.300 5.200V15a1 1 0 0 1-1 1H1.800a1 1 0 0 1-1-1V1.200a1 1 0 0 1 1-1z" fill="#fff"/><path d="M8.300.5V5.100H13" stroke="#5a5a5a" stroke-width=".9" fill="none"/><circle cx="13.100" cy="7.900" r="3.950" fill="#2c5fd3"/><rect x="12.450" y="6.900" width="1.400" height="3.300" fill="#a9c0f0"/><rect x="12.450" y="5.200" width="1.400" height="1.100" fill="#a9c0f0"/></svg></span><span class="i" style="left:529px;top:8px"><svg width="17" height="16" viewBox="0 0 17 16"><path d="M4.300 4H15a1.300 1.300 0 0 1 1.300 1.300V13.400a1.300 1.300 0 0 1-1.300 1.300H4.300A1.300 1.300 0 0 1 3 13.400V5.300z" fill="#e3c968"/><path d="M2.200.7H5.900L7.100 2.900H12.800a1.300 1.300 0 0 1 1.300 1.300V11.100a1.300 1.300 0 0 1-1.300 1.300H2.200A1.300 1.300 0 0 1 .9 11.100V2A1.300 1.300 0 0 1 2.200.7z" fill="#f0d880" stroke="rgba(50,50,50,.55)" stroke-width=".7"/></svg></span><span class="i" style="left:801px;top:8px"><svg width="18" height="17" viewBox="0 0 18 17"><ellipse cx="9" cy="6.400" rx="8.100" ry="6.700" fill="#e0e0e0"/><path d="M10 12.400L14.900 16.100L14.300 9.500z" fill="#e0e0e0"/></svg></span></div><div class="r" style="top:370px"><div class="vl" style="left:118px;top:0;height:37px"></div><div class="vl" style="left:295px;top:0;height:37px"></div><div class="vl" style="left:354px;top:0;height:37px"></div><div class="vl" style="left:508px;top:0;height:37px"></div><div class="vl" style="left:567px;top:0;height:37px"></div><div class="vl" style="left:768px;top:0;height:37px"></div><div class="vl" style="left:851px;top:0;height:37px"></div><div class="vl" style="left:1028px;top:0;height:37px"></div><div class="vl" style="left:1205px;top:0;height:37px"></div><div class="vl" style="left:1359px;top:0;height:37px"></div><div class="vl" style="left:1512px;top:0;height:37px"></div><div class="vl" style="left:1690px;top:0;height:37px"></div><div class="vl" style="left:1867px;top:0;height:37px"></div><span class="i" style="left:316px;top:8px"><svg width="18" height="17" viewBox="0 0 18 17"><path d="M1.800.2H8.400L13.300 5.200V15a1 1 0 0 1-1 1H1.800a1 1 0 0 1-1-1V1.200a1 1 0 0 1 1-1z" fill="#fff"/><path d="M8.300.5V5.100H13" stroke="#5a5a5a" stroke-width=".9" fill="none"/><circle cx="13.100" cy="7.900" r="3.950" fill="#2c5fd3"/><rect x="12.450" y="6.900" width="1.400" height="3.300" fill="#a9c0f0"/><rect x="12.450" y="5.200" width="1.400" height="1.100" fill="#a9c0f0"/></svg></span><span class="i" style="left:529px;top:8px"><svg width="17" height="16" viewBox="0 0 17 16"><path d="M4.300 4H15a1.300 1.300 0 0 1 1.300 1.300V13.400a1.300 1.300 0 0 1-1.300 1.300H4.300A1.300 1.300 0 0 1 3 13.400V5.300z" fill="#e3c968"/><path d="M2.200.7H5.900L7.100 2.900H12.800a1.300 1.300 0 0 1 1.300 1.300V11.100a1.300 1.300 0 0 1-1.300 1.300H2.200A1.300 1.300 0 0 1 .9 11.100V2A1.300 1.300 0 0 1 2.200.7z" fill="#f0d880" stroke="rgba(50,50,50,.55)" stroke-width=".7"/></svg></span><span class="i" style="left:801px;top:8px"><svg width="18" height="17" viewBox="0 0 18 17"><ellipse cx="9" cy="6.400" rx="8.100" ry="6.700" fill="#e0e0e0"/><path d="M10 12.400L14.900 16.100L14.300 9.500z" fill="#e0e0e0"/></svg></span></div><div class="r alt" style="top:407px"><div class="vl" style="left:118px;top:0;height:37px"></div><div class="vl" style="left:295px;top:0;height:37px"></div><div class="vl" style="left:354px;top:0;height:37px"></div><div class="vl" style="left:508px;top:0;height:37px"></div><div class="vl" style="left:567px;top:0;height:37px"></div><div class="vl" style="left:768px;top:0;height:37px"></div><div class="vl" style="left:851px;top:0;height:37px"></div><div class="vl" style="left:1028px;top:0;height:37px"></div><div class="vl" style="left:1205px;top:0;height:37px"></div><div class="vl" style="left:1359px;top:0;height:37px"></div><div class="vl" style="left:1512px;top:0;height:37px"></div><div class="vl" style="left:1690px;top:0;height:37px"></div><div class="vl" style="left:1867px;top:0;height:37px"></div><span class="i" style="left:316px;top:8px"><svg width="18" height="17" viewBox="0 0 18 17"><path d="M1.800.2H8.400L13.300 5.200V15a1 1 0 0 1-1 1H1.800a1 1 0 0 1-1-1V1.200a1 1 0 0 1 1-1z" fill="#fff"/><path d="M8.300.5V5.100H13" stroke="#5a5a5a" stroke-width=".9" fill="none"/><circle cx="13.100" cy="7.900" r="3.950" fill="#2c5fd3"/><rect x="12.450" y="6.900" width="1.400" height="3.300" fill="#a9c0f0"/><rect x="12.450" y="5.200" width="1.400" height="1.100" fill="#a9c0f0"/></svg></span><span class="i" style="left:529px;top:8px"><svg width="17" height="16" viewBox="0 0 17 16"><path d="M4.300 4H15a1.300 1.300 0 0 1 1.300 1.300V13.400a1.300 1.300 0 0 1-1.300 1.300H4.300A1.300 1.300 0 0 1 3 13.400V5.300z" fill="#e3c968"/><path d="M2.200.7H5.900L7.100 2.900H12.800a1.300 1.300 0 0 1 1.300 1.300V11.100a1.300 1.300 0 0 1-1.300 1.300H2.200A1.300 1.300 0 0 1 .9 11.100V2A1.300 1.300 0 0 1 2.200.7z" fill="#f0d880" stroke="rgba(50,50,50,.55)" stroke-width=".7"/></svg></span><span class="i" style="left:801px;top:8px"><svg width="18" height="17" viewBox="0 0 18 17"><ellipse cx="9" cy="6.400" rx="8.100" ry="6.700" fill="#e0e0e0"/><path d="M10 12.400L14.900 16.100L14.300 9.500z" fill="#e0e0e0"/></svg></span></div></div><div id="sb"><svg class="abs" style="left:4px;top:6px" width="9" height="6" viewBox="0 0 9 6"><path d="M.9 5L4.500 1 8.100 5z" fill="#a3a3a3"/></svg>
<div class="abs" style="left:2px;top:17px;width:13px;height:241px;background:#c1c1c1"></div>
<svg class="abs" style="left:4px;top:428px" width="9" height="6" viewBox="0 0 9 6"><path d="M.9 1L4.500 5 8.100 1z" fill="#505050"/></svg></div>
<div id="tb"></div><svg class="abs" style="left:24px;top:713px" width="18" height="18" viewBox="0 0 18 18"><g fill="none" stroke="#8f8f8f"><circle cx="9" cy="9.100" r="7.300" stroke-width="1.700" stroke-dasharray="1.850 1.427"/><circle cx="9" cy="9.100" r="5.300" stroke-width="2.500"/><circle cx="9" cy="9.100" r="1.200" stroke-width="1"/><path d="M9 7.900V5M10.100 8.700l2.700-.9M9.700 10.100l1.700 2.300M8.300 10.100l-1.700 2.300M7.900 8.700l-2.700-.9" stroke-width=".9"/></g></svg><svg class="abs" style="left:115px;top:713px" width="18" height="18" viewBox="0 0 18 18"><path d="M3 1.500H11L15 5.500V16.800H3z" fill="#fff"/><path d="M11 1.500V5.500H15z" fill="#cfcfcf"/><circle cx="4.900" cy="4.900" r="3.900" fill="#1f7f3a"/><path d="M4.900 2.400V5.600" stroke="#fff" stroke-width="1.500"/><path d="M2.800 4.900h4.200L4.900 7.400z" fill="#fff"/><rect x="9.300" y="9" width="7.700" height="7" fill="#1f7f3a"/><path d="M11.200 10.400l3.900 4.200M15.100 10.400l-3.900 4.200" stroke="#fff" stroke-width="1.300"/></svg><div id="pg"></div><svg class="abs" style="left:30px;top:758px" width="9" height="10" viewBox="0 0 9 10"><rect x=".7" y="1" width="1.500" height="8" fill="#c4c4c4"/><path d="M8.300 1v8L2.400 5z" fill="#c4c4c4"/></svg>
<svg class="abs" style="left:61px;top:758px" width="8" height="10" viewBox="0 0 8 10"><path d="M7.300 1v8L1 5z" fill="#c4c4c4"/></svg>
<div class="abs" style="left:80px;top:748px;width:30px;height:30px;background:#5a5a5a"></div>
<svg class="abs" style="left:271px;top:758px" width="8" height="10" viewBox="0 0 8 10"><path d="M.8 1v8L7.100 5z" fill="#fff"/></svg>
<svg class="abs" style="left:300px;top:758px" width="9" height="10" viewBox="0 0 9 10"><rect x="6.800" y="1" width="1.500" height="8" fill="#fff"/><path d="M.7 1v8L6.600 5z" fill="#fff"/></svg>
<div class="abs" style="left:368px;top:749px;width:68px;height:28px;background:#fff;border-radius:3px"></div>
<div class="abs" style="left:486px;top:749px;width:43px;height:28px;background:#fff;border-radius:3px 0 0 3px"></div>
<div class="abs" style="left:529px;top:749px;width:26px;height:28px;background:linear-gradient(#333,#2a2a2a);border-radius:0 3px 3px 0"></div>
<svg class="abs" style="left:537px;top:759px" width="9" height="7" viewBox="0 0 9 7"><path d="M.5.500h8L4.500 6z" fill="#fff"/></svg>
<div class="rb" style="left:1794px"><svg class="abs" style="left:0;top:0" width="26" height="26" viewBox="0 0 26 26"><rect x="11.800" y="6" width="2.500" height="14.300" fill="#fff"/><path d="M4.500 13.500L9.100 10.600V16.400zM21.500 13.500L16.900 10.600V16.400z" fill="#fff"/><path d="M9 13.500h3M14 13.500h3" stroke="#fff" stroke-width="1.200"/></svg></div>
<div class="rb" style="left:1834px"><svg class="abs" style="left:0;top:0" width="26" height="26" viewBox="0 0 26 26"><path d="M6.200 7.200H20L14.900 13.200V19.200L11.500 20.400V13.200z" fill="#fff"/><path d="M9.800 5.200L20.600 15" stroke="#272625" stroke-width="1.700"/><path d="M11 4.600L21.800 14.400" stroke="#fff" stroke-width="1.300"/></svg></div>
<div class="rb" style="left:1874px"><svg class="abs" style="left:0;top:0" width="26" height="26" viewBox="0 0 26 26"><path d="M13.300 8A6.100 6.100 0 1 0 19.300 13" stroke="#fff" stroke-width="2" fill="none"/><path d="M13 4.800V10.800L18.400 7.800z" fill="#fff"/></svg></div>
<span class="t" style="left:43.95px;top:19px;font-size:12.5px;letter-spacing:-0.450px;font-weight:700">Sara Productions</span>
<span class="t" style="left:34.00px;top:56px;font-size:12px;letter-spacing:0.013px">Home page</span>
<span class="t" style="left:132.30px;top:56px;font-size:12px;letter-spacing:0.042px">Account</span>
<span class="t" style="left:227.30px;top:56px;font-size:12px;letter-spacing:0.417px">Help</span>
<span class="t" style="left:304.50px;top:56px;font-size:12px;letter-spacing:0.283px">Log out</span>
<span class="t" style="left:395.60px;top:56px;font-size:12px;letter-spacing:-0.279px">13:55:22</span>
<span class="t" style="left:931.00px;top:8px;font-size:18.4px;letter-spacing:0.394px">Dashboard</span>
<span class="t" style="left:37.50px;top:94px;font-size:13.7px;letter-spacing:0.200px">Orders</span>
<span class="t" style="left:126.45px;top:94px;font-size:13.7px;letter-spacing:0.064px">Schedule</span>
<span class="t" style="left:229.70px;top:94px;font-size:13.7px;letter-spacing:-0.225px">Files</span>
<span class="t" style="left:26.25px;top:192px;font-size:14px;letter-spacing:-0.250px">Status</span>
<span class="t" style="left:145.50px;top:192px;font-size:14px">Account</span>
<span class="t" style="left:321.75px;top:172px;font-size:14px;letter-spacing:0.375px">Order</span>
<span class="t" style="left:321.50px;top:192px;font-size:14px;letter-spacing:0.833px">info</span>
<span class="t" style="left:381.00px;top:192px;font-size:14px;letter-spacing:0.068px">Order number</span>
<span class="t" style="left:534.25px;top:172px;font-size:14px;letter-spacing:0.375px">Order</span>
<span class="t" style="left:534.75px;top:192px;font-size:14px;letter-spacing:0.062px">files</span>
<span class="t" style="left:593.75px;top:192px;font-size:14px;letter-spacing:0.078px">Order supply date</span>
<span class="t" style="left:795.00px;top:172px;font-size:14px;letter-spacing:0.214px">Approved</span>
<span class="t" style="left:794.75px;top:192px;font-size:14px;letter-spacing:0.300px">titles</span>
<span class="t" style="left:877.75px;top:192px;font-size:14px;letter-spacing:0.250px">Title</span>
<span class="t" style="left:1054.25px;top:192px;font-size:14px;letter-spacing:-0.450px">Series</span>
<span class="t" style="left:1231.75px;top:192px;font-size:14px;letter-spacing:-0.400px">Season</span>
<span class="t" style="left:1385.25px;top:192px;font-size:14px;letter-spacing:-0.125px">Episode</span>
<span class="t" style="left:1538.75px;top:192px;font-size:14px;letter-spacing:0.357px">Duration</span>
<span class="t" style="left:1716.25px;top:192px;font-size:14px;letter-spacing:0.136px">Media number</span>
<span class="t" style="left:27.00px;top:277px;font-size:14px;letter-spacing:0.050px">Active</span>
<span class="t" style="left:144.25px;top:277px;font-size:14px;letter-spacing:-0.133px">Sara Productions</span>
<span class="t" style="left:381.20px;top:277px;font-size:14px;letter-spacing:-0.130px">189908</span>
<span class="t" style="left:599.25px;top:277px;font-size:14px;letter-spacing:-0.092px">25/10/2024 15:52:00</span>
<span class="t" style="left:877.25px;top:277px;font-size:14px;letter-spacing:0.231px">Order import 3</span>
<span class="t" style="left:1054.25px;top:277px;font-size:14px;letter-spacing:-0.167px">Friends</span>
<span class="t" style="left:1539.00px;top:277px;font-size:14px;letter-spacing:-0.214px">00:11:58</span>
<span class="t" style="left:27.00px;top:314px;font-size:14px;letter-spacing:0.050px">Active</span>
<span class="t" style="left:144.25px;top:314px;font-size:14px;letter-spacing:-0.133px">Sara Productions</span>
<span class="t" style="left:381.20px;top:314px;font-size:14px;letter-spacing:-0.130px">189928</span>
<span class="t" style="left:599.25px;top:314px;font-size:14px;letter-spacing:-0.092px">25/10/2024 15:52:00</span>
<span class="t" style="left:877.50px;top:314px;font-size:14px;letter-spacing:-0.023px">engines test</span>
<span class="t" style="left:1054.25px;top:314px;font-size:14px;letter-spacing:-0.167px">Friends</span>
<span class="t" style="left:1539.00px;top:314px;font-size:14px;letter-spacing:-0.357px">00:02:23</span>
<span class="t" style="left:27.00px;top:351px;font-size:14px;letter-spacing:0.050px">Active</span>
<span class="t" style="left:144.25px;top:351px;font-size:14px;letter-spacing:-0.133px">Sara Productions</span>
<span class="t" style="left:381.20px;top:351px;font-size:14px;letter-spacing:-0.130px">189929</span>
<span class="t" style="left:599.25px;top:351px;font-size:14px;letter-spacing:-0.092px">25/10/2024 15:52:00</span>
<span class="t" style="left:877.50px;top:351px;font-size:14px;letter-spacing:-0.023px">engines test</span>
<span class="t" style="left:1054.25px;top:351px;font-size:14px;letter-spacing:-0.167px">Friends</span>
<span class="t" style="left:1539.00px;top:351px;font-size:14px;letter-spacing:-0.357px">00:02:23</span>
<span class="t" style="left:27.00px;top:388px;font-size:14px;letter-spacing:0.050px">Active</span>
<span class="t" style="left:144.25px;top:388px;font-size:14px;letter-spacing:-0.133px">Sara Productions</span>
<span class="t" style="left:381.20px;top:388px;font-size:14px;letter-spacing:-0.130px">189907</span>
<span class="t" style="left:599.25px;top:388px;font-size:14px;letter-spacing:-0.092px">25/10/2024 15:35:00</span>
<span class="t" style="left:877.25px;top:388px;font-size:14px;letter-spacing:0.231px">Order import 3</span>
<span class="t" style="left:1054.25px;top:388px;font-size:14px;letter-spacing:-0.167px">Friends</span>
<span class="t" style="left:1539.00px;top:388px;font-size:14px;letter-spacing:-0.357px">00:02:23</span>
<span class="t" style="left:27.00px;top:425px;font-size:14px;letter-spacing:0.050px">Active</span>
<span class="t" style="left:144.25px;top:425px;font-size:14px;letter-spacing:-0.133px">Sara Productions</span>
<span class="t" style="left:381.20px;top:425px;font-size:14px;letter-spacing:-0.130px">189904</span>
<span class="t" style="left:599.25px;top:425px;font-size:14px;letter-spacing:-0.092px">25/10/2024 14:30:00</span>
<span class="t" style="left:877.25px;top:425px;font-size:14px;letter-spacing:0.192px">Order import 1</span>
<span class="t" style="left:1054.25px;top:425px;font-size:14px;letter-spacing:-0.167px">Friends</span>
<span class="t" style="left:1385.25px;top:425px;font-size:14px;letter-spacing:0.500px">52</span>
<span class="t" style="left:1539.00px;top:425px;font-size:14px;letter-spacing:-0.357px">00:02:23</span>
<span class="t" style="left:27.00px;top:462px;font-size:14px;letter-spacing:0.050px">Active</span>
<span class="t" style="left:144.25px;top:462px;font-size:14px;letter-spacing:-0.133px">Sara Productions</span>
<span class="t" style="left:381.20px;top:462px;font-size:14px;letter-spacing:-0.130px">189739</span>
<span class="t" style="left:599.00px;top:462px;font-size:14px;letter-spacing:-0.078px">17/09/2024 17:00:00</span>
<span class="t" style="left:878.00px;top:462px;font-size:14px;letter-spacing:0.069px">Watch folder manual</span>
<span class="t" style="left:1539.00px;top:462px;font-size:14px;letter-spacing:-0.357px">00:02:23</span>
<span class="t" style="left:1717.00px;top:462px;font-size:14px;letter-spacing:-0.844px">WATCHAUTO</span>
<span class="t" style="left:27.00px;top:499px;font-size:14px;letter-spacing:0.050px">Active</span>
<span class="t" style="left:144.25px;top:499px;font-size:14px;letter-spacing:-0.133px">Sara Productions</span>
<span class="t" style="left:381.20px;top:499px;font-size:14px;letter-spacing:-0.130px">189740</span>
<span class="t" style="left:599.00px;top:499px;font-size:14px;letter-spacing:-0.078px">17/09/2024 17:00:00</span>
<span class="t" style="left:878.00px;top:499px;font-size:14px;letter-spacing:-0.229px">ASR + MT test</span>
<span class="t" style="left:1539.00px;top:499px;font-size:14px;letter-spacing:-0.357px">00:02:23</span>
<span class="t" style="left:1717.00px;top:499px;font-size:14px;letter-spacing:-0.844px">WATCHAUTO</span>
<span class="t" style="left:27.00px;top:536px;font-size:14px;letter-spacing:0.050px">Active</span>
<span class="t" style="left:144.25px;top:536px;font-size:14px;letter-spacing:-0.133px">Sara Productions</span>
<span class="t" style="left:381.70px;top:536px;font-size:14px;letter-spacing:-0.130px">3425</span>
<span class="t" style="left:599.00px;top:536px;font-size:14px;letter-spacing:-0.078px">10/09/2024 17:00:00</span>
<span class="t" style="left:877.25px;top:536px;font-size:14px;letter-spacing:0.087px">Correction order multila...</span>
<span class="t" style="left:1232.00px;top:536px;font-size:14px">1</span>
<span class="t" style="left:1539.00px;top:536px;font-size:14px;letter-spacing:-0.357px">00:02:23</span>
<span class="t" style="left:1716.00px;top:536px;font-size:14px;letter-spacing:0.205px">Media number</span>
<span class="t" style="left:27.00px;top:573px;font-size:14px;letter-spacing:0.050px">Active</span>
<span class="t" style="left:144.25px;top:573px;font-size:14px;letter-spacing:-0.133px">Sara Productions</span>
<span class="t" style="left:381.20px;top:573px;font-size:14px;letter-spacing:-0.130px">189423</span>
<span class="t" style="left:599.50px;top:573px;font-size:14px;letter-spacing:-0.106px">01/09/2024 00:00:00</span>
<span class="t" style="left:877.25px;top:573px;font-size:14px;letter-spacing:-0.393px">Sara&#x27;s Day Show</span>
<span class="t" style="left:1386.00px;top:573px;font-size:14px">1</span>
<span class="t" style="left:1539.00px;top:573px;font-size:14px;letter-spacing:-0.357px">00:02:23</span>
<span class="t" style="left:27.00px;top:610px;font-size:14px;letter-spacing:0.050px">Active</span>
<span class="t" style="left:144.25px;top:610px;font-size:14px;letter-spacing:-0.133px">Sara Productions</span>
<span class="t" style="left:381.20px;top:610px;font-size:14px;letter-spacing:-0.130px">189425</span>
<span class="t" style="left:599.50px;top:610px;font-size:14px;letter-spacing:-0.106px">01/09/2024 00:00:00</span>
<span class="t" style="left:877.25px;top:610px;font-size:14px;letter-spacing:-0.393px">Sara&#x27;s Day Show</span>
<span class="t" style="left:1386.00px;top:610px;font-size:14px">1</span>
<span class="t" style="left:1539.00px;top:610px;font-size:14px;letter-spacing:-0.357px">00:02:23</span>
<span class="t" style="left:27.00px;top:647px;font-size:14px;letter-spacing:0.050px">Active</span>
<span class="t" style="left:144.25px;top:647px;font-size:14px;letter-spacing:-0.133px">Sara Productions</span>
<span class="t" style="left:381.20px;top:647px;font-size:14px;letter-spacing:-0.130px">189426</span>
<span class="t" style="left:599.50px;top:647px;font-size:14px;letter-spacing:-0.106px">01/09/2024 00:00:00</span>
<span class="t" style="left:877.25px;top:647px;font-size:14px;letter-spacing:-0.393px">Sara&#x27;s Day Show</span>
<span class="t" style="left:1386.00px;top:647px;font-size:14px">1</span>
<span class="t" style="left:1539.00px;top:647px;font-size:14px;letter-spacing:-0.357px">00:02:23</span>
<span class="t" style="left:27.00px;top:684px;font-size:14px;letter-spacing:0.050px">Active</span>
<span class="t" style="left:144.25px;top:684px;font-size:14px;letter-spacing:-0.133px">Sara Productions</span>
<span class="t" style="left:381.20px;top:684px;font-size:14px;letter-spacing:-0.130px">189427</span>
<span class="t" style="left:599.50px;top:684px;font-size:14px;letter-spacing:-0.106px">01/09/2024 00:00:00</span>
<span class="t" style="left:877.25px;top:684px;font-size:14px;letter-spacing:-0.393px">Sara&#x27;s Day Show</span>
<span class="t" style="left:1386.00px;top:684px;font-size:14px">1</span>
<span class="t" style="left:1539.00px;top:684px;font-size:14px;letter-spacing:-0.321px">00:00:02</span>
<span class="t" style="left:46.30px;top:720px;font-size:12px;letter-spacing:0.100px">Grid layout</span>
<span class="t" style="left:137.50px;top:720px;font-size:12px;letter-spacing:0.036px">Export to excel</span>
<span class="t" style="left:90.80px;top:756px;font-size:14px">1</span>
<span class="t" style="left:120.75px;top:756px;font-size:14px">2</span>
<span class="t" style="left:150.80px;top:756px;font-size:14px">3</span>
<span class="t" style="left:180.75px;top:756px;font-size:14px">4</span>
<span class="t" style="left:210.80px;top:756px;font-size:14px">5</span>
<span class="t" style="left:239.45px;top:756px;font-size:14px;letter-spacing:-0.325px">...</span>
<span class="t" style="left:333.80px;top:757px;font-size:12px;letter-spacing:-0.367px">Page</span>
<span class="t" style="left:376.50px;top:756px;font-size:14px;color:#000">1</span>
<span class="t" style="left:443.25px;top:757px;font-size:12px;letter-spacing:0.312px">of 12</span>
<span class="t" style="left:493.50px;top:756px;font-size:14px;letter-spacing:-0.250px;color:#000">20</span>
<span class="t" style="left:561.00px;top:757px;font-size:12px;letter-spacing:0.096px">items per page</span>
<span class="t" style="left:1680.00px;top:757px;font-size:12px;letter-spacing:0.067px">1 - 20 of 235 items</span><div id="foot">Copyright © 2012 <span style="color:#8a8b8f;letter-spacing:-.3px"><i style="color:#8a8b8f;letter-spacing:-1.500px">O</i><i style="color:#f5c341;letter-spacing:-1.500px">O</i><i style="color:#5bbde6">O</i>NA.NET</span> ltd. All rights reserved.</div></body></html>
